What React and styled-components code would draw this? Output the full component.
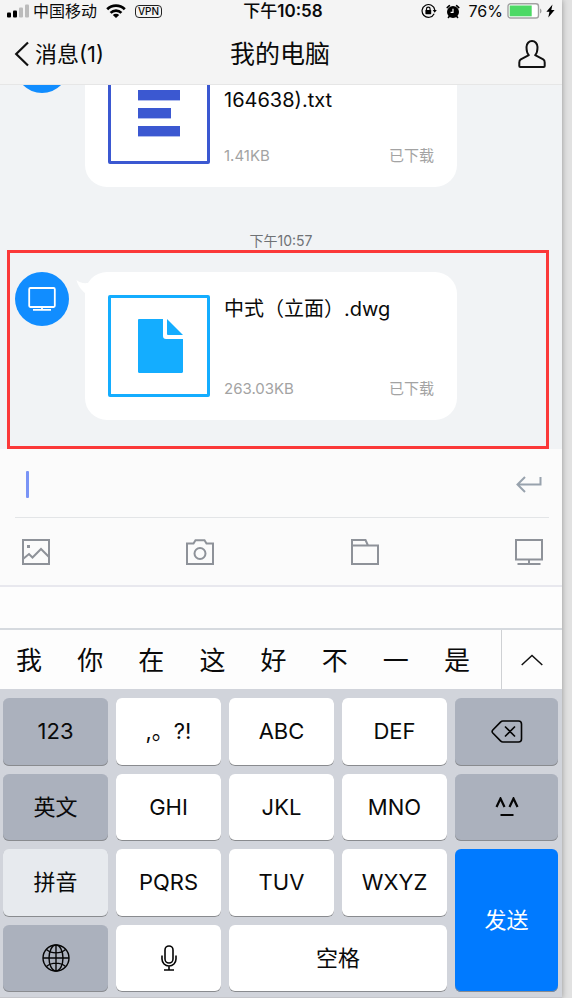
import React from "react";
import styled, { createGlobalStyle, css } from "styled-components";

const GlobalStyle = createGlobalStyle`
  *, *::before, *::after { box-sizing: border-box; }
  body {
    margin: 0;
    background: #e1e1e1;
    color: #0a0a0a;
    font-family: Inter, "Noto Sans CJK SC", sans-serif;
  }
  button, input { font: inherit; color: inherit; }
  svg { display: block; flex: none; }
`;

const Phone = styled.div`
  display: flex;
  flex-direction: column;
  height: 100vh;
  margin-right: 10px;
  background: #f1f3f5;
  box-shadow: 0 0 6px rgba(0, 0, 0, 0.35);
`;

const Header = styled.header`
  flex: none;
  background: #f4f4f4;
  border-bottom: 1px solid #e6e6e6;
`;

const StatusBar = styled.div`
  display: grid;
  grid-template-columns: 1fr auto 1fr;
  align-items: center;
  height: 22px;
  padding: 0 7px;
  font-size: 16px;
  line-height: 22px;
`;

const StatusGroup = styled.div`
  display: flex;
  align-items: center;
  justify-content: ${(p) => (p.$end ? "flex-end" : "flex-start")};
  gap: ${(p) => (p.$tight ? "4px" : "9px")};
`;

const Clock = styled.time`
  padding-left: 4px;
  font-size: 17px;
  font-weight: 600;
`;

const ClockPeriod = styled.span`
  font-weight: 500;
`;

const VpnBadge = styled.span`
  padding: 0 2px;
  border: 1px solid #222;
  border-radius: 4px;
  font-size: 10px;
  font-weight: 500;
  line-height: 11px;
`;

const NavBar = styled.nav`
  display: grid;
  grid-template-columns: 1fr auto 1fr;
  align-items: center;
  height: 62px;
  padding: 1px 16px 0 14px;
`;

const NavButton = styled.button`
  display: flex;
  align-items: center;
  gap: 6px;
  justify-self: ${(p) => (p.$end ? "end" : "start")};
  padding: 0;
  border: 0;
  background: none;
  font-size: 22px;
  line-height: 30px;
`;

const Title = styled.h1`
  margin: 0;
  font-size: 25px;
  font-weight: 400;
  line-height: 36px;
`;

const Chat = styled.main`
  display: flex;
  flex: 1;
  flex-direction: column;
  justify-content: flex-end;
  min-height: 0;
  overflow: hidden;
`;

const Message = styled.article`
  display: flex;
  flex: none;
  gap: 16px;
  padding: 0 105px 0 15px;
  ${(p) =>
    p.$marked &&
    css`
      margin: 0 13px 0 7px;
      padding: 19px 89px 26px 5px;
      border: 3px solid #fb3838;
    `}
`;

const Avatar = styled.div`
  display: grid;
  flex: none;
  place-items: center;
  width: 54px;
  height: 54px;
  border-radius: 50%;
  background: #118dff;
`;

const Bubble = styled.div`
  position: relative;
  display: flex;
  flex: 1;
  gap: 14px;
  min-width: 0;
  padding: 23px;
  border-radius: 22px;
  background: #fff;
`;

const Tail = styled.svg`
  position: absolute;
  top: 8px;
  left: -9px;
`;

const FileThumb = styled.div`
  display: grid;
  flex: none;
  place-items: center;
  width: 102px;
  height: 102px;
  border: 3px solid ${(p) => p.$color};
  border-radius: 2px;
`;

const FileInfo = styled.div`
  display: flex;
  flex: 1;
  flex-direction: column;
  justify-content: space-between;
  min-width: 0;
`;

const FileName = styled.div`
  padding-top: ${(p) => (p.$secondLine ? "24px" : "0")};
  font-size: 20px;
  line-height: 28px;
`;

const FileMeta = styled.div`
  display: flex;
  justify-content: space-between;
  color: #a3a3a3;
  font-size: 15px;
  line-height: 16px;
`;

const Timestamp = styled.time`
  flex: none;
  padding-top: 45px;
  color: #6f7275;
  font-size: 14px;
  line-height: 18px;
  text-align: center;
`;

const Composer = styled.form`
  flex: none;
  background: #fbfbfb;
  border-bottom: 2px solid #e8e8ee;
`;

const InputRow = styled.div`
  display: flex;
  align-items: center;
  height: 69px;
  margin: 0 13px 0 15px;
  padding: 2px 7px 0 11px;
  border-bottom: 1px solid #e3e5e7;
`;

const Caret = styled.span`
  width: 3px;
  height: 27px;
  border-radius: 1px;
  background: #7a94f6;
`;

const MessageInput = styled.input`
  flex: 1;
  min-width: 0;
  height: 40px;
  border: 0;
  outline: 0;
  background: transparent;
  font-size: 20px;
`;

const IconButton = styled.button`
  display: grid;
  place-items: center;
  padding: 0;
  border: 0;
  background: none;
  color: #8e9299;
`;

const Tools = styled.div`
  display: flex;
  align-items: center;
  justify-content: space-between;
  height: 67px;
  padding: 0 19px 0 22px;
`;

const PreeditBar = styled.div`
  flex: none;
  height: 43px;
  border-bottom: 2px solid #d6dadf;
  background: #fdfdfd;
`;

const CandidateBar = styled.div`
  display: flex;
  flex: none;
  height: 59px;
  background: #fdfdfd;
`;

const Candidates = styled.div`
  display: flex;
  flex: 1;
  align-items: center;
  justify-content: space-between;
  padding: 2px 31px 0 16px;
`;

const Candidate = styled.button`
  padding: 0;
  border: 0;
  background: none;
  font-size: 26px;
  line-height: 38px;
`;

const ExpandButton = styled.button`
  display: grid;
  place-items: center;
  width: 61px;
  padding: 0;
  border: 0;
  border-left: 1px solid #cfd1d4;
  background: none;
`;

const Keyboard = styled.section`
  display: grid;
  flex: none;
  grid-template-columns: repeat(4, 105fr) 103fr;
  grid-template-rows: repeat(4, 1fr);
  gap: 8px;
  height: 309px;
  padding: 9px 4px 5px 3px;
  border-bottom: 1px solid #c4c5ca;
  background: #d1d4db;
`;

const keyColors = {
  light: css`
    background: #fff;
  `,
  dark: css`
    background: #abb1bd;
  `,
  pale: css`
    background: #e7eaee;
  `,
  send: css`
    background: #007aff;
    color: #fff;
  `,
};

const Key = styled.button`
  display: grid;
  grid-column: span ${(p) => p.$cols || 1};
  grid-row: span ${(p) => p.$rows || 1};
  place-items: center;
  min-width: 0;
  padding: 0 0 1px;
  border: 0;
  border-radius: 6px;
  box-shadow: inset 0 -1px 0 #898b8f;
  font-size: 22px;
  line-height: 30px;
  ${(p) => keyColors[p.$tone || "light"]}
`;

const SignalIcon = () => (
  <svg width="22" height="14" viewBox="0 0 22 14" aria-label="信号">
    <rect y="8.5" width="4" height="5" rx="1" />
    <rect x="6" y="6.5" width="4" height="7" rx="1" />
    <rect x="12" y="3.5" width="4" height="10" rx="1" fill="#bcbcbc" />
    <rect x="18" y="0.5" width="4" height="13" rx="1" fill="#bcbcbc" />
  </svg>
);

const WifiIcon = () => (
  <svg width="20" height="14" viewBox="0 0 20 14" fill="none" stroke="#000" strokeWidth="2.7" aria-label="无线网络">
    <path d="M1.2 5.3a12.5 12.5 0 0 1 17.6 0M4.6 8.9a7.7 7.7 0 0 1 10.8 0" />
    <path d="M10 14 6.8 11a4.5 4.5 0 0 1 6.4 0Z" fill="#000" stroke="none" />
  </svg>
);

const RotationLockIcon = () => (
  <svg width="16" height="16" viewBox="0 0 16 16" fill="none" stroke="#000" strokeWidth="1.2" aria-label="方向锁定">
    <path d="M13.2 10.8A6.4 6.4 0 1 1 13.8 7" />
    <path d="M11.7 7h4.1l-2.1 2.8Z" fill="#000" stroke="none" />
    <rect x="4.4" y="7" width="5.8" height="4.2" rx=".6" fill="#000" stroke="none" />
    <path d="M5.5 7.2V6a1.8 1.8 0 0 1 3.6 0v1.2" />
  </svg>
);

const AlarmIcon = () => (
  <svg width="14" height="15" viewBox="0 0 14 15" aria-label="闹钟">
    <circle cx="7" cy="8" r="6" />
    <path d="m3.2 12.4-.8 1M10.8 12.4l.8 1M1.2 3.6 3.4 1.7M12.8 3.6l-2.200-1.900" stroke="#000" strokeWidth="1.6" strokeLinecap="round" />
    <path d="M7 4.800v3.600H4.600" stroke="#fff" strokeWidth="1.200" fill="none" />
  </svg>
);

const BatteryIcon = () => (
  <svg width="35" height="16" viewBox="0 0 35 16" aria-label="电池">
    <rect x="1" y=".8" width="30.5" height="14.2" rx="2.6" fill="#fff" stroke="#a2a2a2" strokeWidth="1.4" />
    <rect x="2.7" y="2.5" width="22" height="10.8" fill="#4cd964" />
    <path d="M33 5.4c2 .8 2 4.2 0 5Z" fill="#a2a2a2" />
  </svg>
);

const BoltIcon = () => (
  <svg width="9" height="14" viewBox="0 0 9 14" aria-label="充电中">
    <path d="M6.5.5.4 7.8h3L2.3 13.5 8.6 5.9H5.3Z" />
  </svg>
);

const BackIcon = () => (
  <svg width="15" height="26" viewBox="0 0 15 26" fill="none" stroke="#111" strokeWidth="2.2">
    <path d="M14 1.5 2.2 13 14 24.5" />
  </svg>
);

const PersonIcon = () => (
  <svg width="28" height="28" viewBox="0 0 28 28" fill="none" stroke="#111" strokeWidth="2" strokeLinejoin="round">
    <path d="M10.8 15.2C9 13.3 8.5 10 8.5 7a5.5 6 0 0 1 11 0c0 3-.5 6.3-2.3 8.2l8 4.2c1.2.7 1.5 1.6 1.5 3V26c0 .7-.3 1-1 1H2.3c-.7 0-1-.3-1-1v-3.6c0-1.4.3-2.3 1.5-3Z" />
  </svg>
);

const AvatarScreenIcon = () => (
  <svg width="28" height="24" viewBox="0 0 28 24" fill="none" stroke="#fff" strokeWidth="1.8">
    <rect x="1.2" y="1" width="25.6" height="19" rx="1.2" />
    <path d="M14 20v3M5 22.800h18" />
  </svg>
);

const TextFileIcon = () => (
  <svg width="42" height="56" viewBox="0 0 42 56" fill="#3b58d1">
    <rect y="5" width="42" height="10.4" />
    <rect y="23" width="33" height="10.4" />
    <rect y="41" width="42" height="10.4" />
  </svg>
);

const DocumentIcon = () => (
  <svg width="50" height="54" viewBox="-4 0 50 54" fill="#14adff">
    <path d="M1.2 0H25v17a3 3 0 0 0 3 3H45V52.8c0 .7-.5 1.2-1.2 1.2H1.2C.5 54 0 53.5 0 52.8V1.2C0 .5.5 0 1.2 0ZM29 0l16 16H30a1 1 0 0 1-1-1Z" />
  </svg>
);

const ReturnIcon = () => (
  <svg width="26" height="17" viewBox="0 0 26 17" fill="none" stroke="#98a2ad" strokeWidth="2">
    <path d="M9 1 1.5 8.5 9 16M2 8.5H24.5V1" />
  </svg>
);

const toolIcons = [
  {
    label: "图片",
    art: (
      <>
        <path d="M1 1H27V25H1ZM1 20l6-5 3.5 3.5L19 10l8 8" />
        <rect x="5" y="6" width="3" height="3" fill="currentColor" stroke="none" />
      </>
    ),
  },
  {
    label: "拍照",
    art: (
      <>
        <path d="M1 4.5H7.5L9.5 1.2H18.5L20.5 4.5H27V25H1Z" />
        <circle cx="14" cy="14.5" r="5.5" />
      </>
    ),
  },
  { label: "文件", art: <path d="M1 25V1H14.5L17 6.5H27V25ZM1 6.5H17" /> },
  { label: "电脑", art: <path d="M1 1H27V20.5H1ZM14 20.5V25M2.5 25H25.5" /> },
];

const ChevronUpIcon = () => (
  <svg width="22" height="12" viewBox="0 0 22 12" fill="none" stroke="#111" strokeWidth="1.5">
    <path d="M.7 11 11 1.5 21.3 11" />
  </svg>
);

const BackspaceIcon = () => (
  <svg width="32" height="23" viewBox="0 0 32 23" fill="none" stroke="#050505" strokeWidth="1.6">
    <path d="M12 1H27.5a3 3 0 0 1 3 3V19a3 3 0 0 1-3 3H12c-1 0-1.8-.4-2.5-1.1L1.8 13c-.9-1-.9-2 0-3L9.5 2.1C10.2 1.4 11 1 12 1ZM14 6.5l10 10M24 6.5l-10 10" />
  </svg>
);

const FaceIcon = () => (
  <svg width="24" height="20" viewBox="0 0 24 20" fill="none" stroke="#050505" strokeWidth="2.2">
    <path d="M1.500 10 5.500 1.500 9.500 10M14.500 10l4-8.500 4 8.500M5.500 18h13" />
  </svg>
);

const GlobeIcon = () => (
  <svg width="28" height="28" viewBox="0 0 28 28" fill="none" stroke="#050505" strokeWidth="1.4">
    <circle cx="14" cy="14" r="13" />
    <ellipse cx="14" cy="14" rx="7" ry="13" />
    <path d="M14 1V27M1 14H27M4.5 5.5c5 4.5 14 4.5 19 0M4.5 22.5c5-4.5 14-4.5 19 0" />
  </svg>
);

const MicIcon = () => (
  <svg width="16" height="26" viewBox="0 0 16 26" fill="none" stroke="#050505" strokeWidth="1.6">
    <rect x="4" y="1" width="8" height="17" rx="4" />
    <path d="M1 10.5V14a7 7 0 0 0 14 0V10.5M8 21v4M3 25H13" />
  </svg>
);

const candidates = ["我", "你", "在", "这", "好", "不", "一", "是"];

const keys = [
  { label: "123", tone: "dark" },
  { label: ",。?!" },
  { label: "ABC" },
  { label: "DEF" },
  { label: "删除", icon: <BackspaceIcon />, tone: "dark" },
  { label: "英文", tone: "dark" },
  { label: "GHI" },
  { label: "JKL" },
  { label: "MNO" },
  { label: "表情", icon: <FaceIcon />, tone: "dark" },
  { label: "拼音", tone: "pale" },
  { label: "PQRS" },
  { label: "TUV" },
  { label: "WXYZ" },
  { label: "发送", tone: "send", rows: 2 },
  { label: "切换键盘", icon: <GlobeIcon />, tone: "dark" },
  { label: "语音", icon: <MicIcon /> },
  { label: "空格", cols: 2 },
];

function FileMessage({ name, size, color, icon, secondLine, marked }) {
  return (
    <Message $marked={marked}>
      <Avatar>
        <AvatarScreenIcon />
      </Avatar>
      <Bubble>
        <Tail width="14" height="14" viewBox="0 0 14 14" fill="#fff">
          <path d="M.5 0C3 2.5 7 3.5 12 3L14 10 9 13C5 9.5 2 6 .5 0Z" />
        </Tail>
        <FileThumb $color={color}>{icon}</FileThumb>
        <FileInfo>
          <FileName $secondLine={secondLine}>{name}</FileName>
          <FileMeta>
            <span>{size}</span>
            <span>已下载</span>
          </FileMeta>
        </FileInfo>
      </Bubble>
    </Message>
  );
}

export default function App() {
  return (
    <>
      <GlobalStyle />
      <Phone>
        <Header>
          <StatusBar>
            <StatusGroup>
              <StatusGroup $tight>
                <SignalIcon />
                <span>中国移动</span>
              </StatusGroup>
              <WifiIcon />
              <VpnBadge>VPN</VpnBadge>
            </StatusGroup>
            <Clock>
              <ClockPeriod>下午</ClockPeriod>10:58
            </Clock>
            <StatusGroup $end>
              <RotationLockIcon />
              <AlarmIcon />
              <StatusGroup $tight>
                <span>76%</span>
                <BatteryIcon />
                <BoltIcon />
              </StatusGroup>
            </StatusGroup>
          </StatusBar>
          <NavBar>
            <NavButton type="button">
              <BackIcon />
              消息(1)
            </NavButton>
            <Title>我的电脑</Title>
            <NavButton type="button" $end aria-label="个人资料">
              <PersonIcon />
            </NavButton>
          </NavBar>
        </Header>

        <Chat>
          <FileMessage name="164638).txt" size="1.41KB" color="#3b58d1" icon={<TextFileIcon />} secondLine />
          <Timestamp>下午10:57</Timestamp>
          <FileMessage name="中式（立面）.dwg" size="263.03KB" color="#14adff" icon={<DocumentIcon />} marked />
        </Chat>

        <Composer>
          <InputRow>
            <Caret />
            <MessageInput type="text" aria-label="消息" />
            <IconButton type="button" aria-label="换行">
              <ReturnIcon />
            </IconButton>
          </InputRow>
          <Tools>
            {toolIcons.map(({ label, art }) => (
              <IconButton key={label} type="button" aria-label={label}>
                <svg width="28" height="26" viewBox="0 0 28 26" fill="none" stroke="currentColor" strokeWidth="2">
                  {art}
                </svg>
              </IconButton>
            ))}
          </Tools>
        </Composer>

        <PreeditBar />
        <CandidateBar>
          <Candidates>
            {candidates.map((text) => (
              <Candidate key={text} type="button">
                {text}
              </Candidate>
            ))}
          </Candidates>
          <ExpandButton type="button" aria-label="展开候选">
            <ChevronUpIcon />
          </ExpandButton>
        </CandidateBar>

        <Keyboard aria-label="键盘">
          {keys.map(({ label, icon, tone, cols, rows }) => (
            <Key key={label} type="button" aria-label={label} $tone={tone} $cols={cols} $rows={rows}>
              {icon || label}
            </Key>
          ))}
        </Keyboard>
      </Phone>
    </>
  );
}
